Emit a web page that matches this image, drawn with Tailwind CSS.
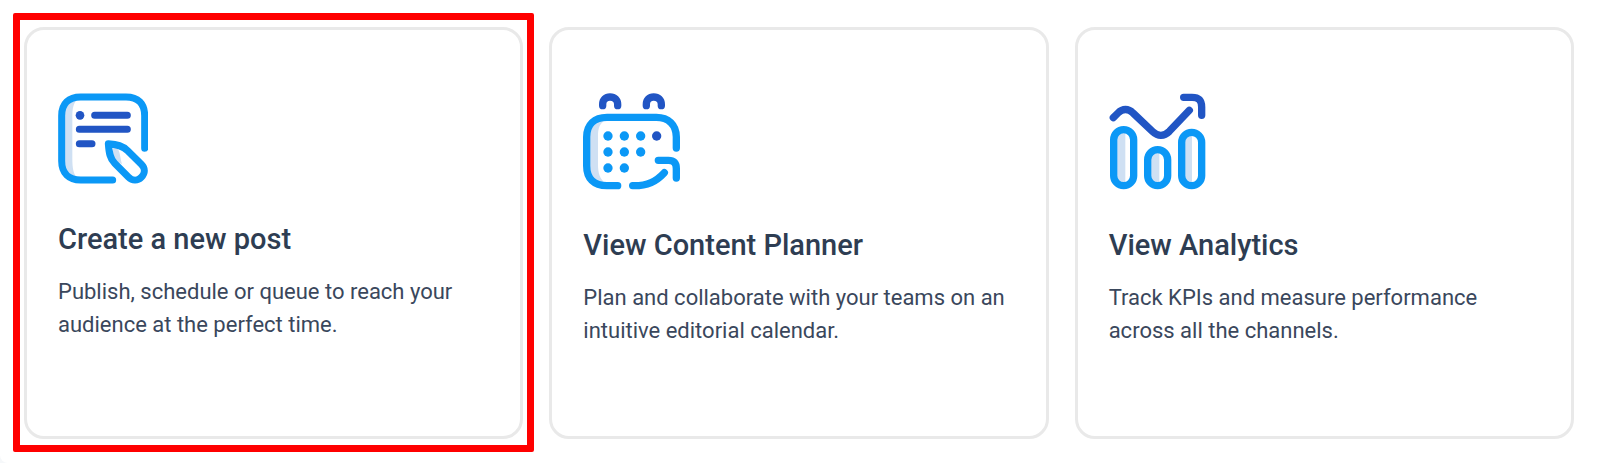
<!DOCTYPE html>
<html lang="en">
<head>
<meta charset="utf-8">
<meta name="viewport" content="width=device-width, initial-scale=1">
<title>Quick actions</title>
<script src="https://cdn.jsdelivr.net/npm/@tailwindcss/browser@4"></script>
</head>
<body class="bg-[#f6f8fa] font-['Roboto',sans-serif] text-[#2e3d52]">
<main class="min-h-screen rounded-bl-lg bg-white pt-[27px] pr-[26px] pb-6 pl-6">
  <div class="grid grid-cols-1 gap-[26px] md:grid-cols-3">

    <a href="#post" class="relative block min-h-[412px] rounded-[20px] border-3 border-[#e9e9e9] px-[31px] pt-[63px] pb-12">
      <span class="pointer-events-none absolute -top-[17px] -right-[14px] -bottom-4 -left-[14px] rounded-xs border-7 border-[#ff0000]"></span>
      <svg class="block h-[91px] w-[90px]" viewBox="24 24 270 273" fill="none" stroke-linecap="round" stroke-linejoin="round" aria-hidden="true">
        <path d="M84 40C48 40 38 58 38 90V230C38 266 52 282 86 284C70 270 67 250 67 220V98C67 70 70 54 84 40Z" fill="#cfe0f3"/>
        <path d="M190 186C212 188 208 210 216 238L184 218Z" fill="#cfe0f3"/>
        <path d="M284 190V92C284 56 264 36 228 36H92C56 36 35 56 35 92V228C35 264 56 285 92 285H188" stroke="#0b98f6" stroke-width="21"/>
        <path d="M175 176C177 204 180 221 194 235L235 276C247 288 263 288 274 277C286 265 286 250 274 238L233 197C218 182 202 178 175 176Z" stroke="#0b98f6" stroke-width="21"/>
        <circle cx="90" cy="91" r="13" fill="#2155c4"/>
        <path d="M134 91H232M88 133H232M88 176H126" stroke="#2155c4" stroke-width="21"/>
      </svg>
      <h2 class="mt-[37px] text-[29px] leading-9 font-medium">Create a new post</h2>
      <p class="mt-[18px] text-[22px] leading-[33px] text-[#3a475c]">Publish, schedule or queue to reach your audience at the perfect time.</p>
    </a>

    <a href="#planner" class="block min-h-[412px] rounded-[20px] border-3 border-[#e9e9e9] px-[31px] pt-[63px] pb-12">
      <svg class="block h-[97px] w-[97px]" viewBox="24 24 291 291" fill="none" stroke-linecap="round" stroke-linejoin="round" aria-hidden="true">
        <path d="M92 104C52 104 38 116 38 156V250C38 286 54 296 92 296C74 282 69 264 69 238V154C69 128 74 116 92 104Z" fill="#cfe0f3"/>
        <path d="M83 62V58C83 44 92 36 105 36C119 36 128 44 128 58V62M214 62V58C214 44 223 36 236 36C250 36 259 44 259 58V62" stroke="#2155c4" stroke-width="22"/>
        <path d="M304 189V156C304 119 280 97 244 97H96C58 97 35 119 35 156V242C35 280 56 302 96 302H128" stroke="#0b98f6" stroke-width="22"/>
        <path d="M173 302C218 303 244 289 268 263M250 226H280C297 226 304 235 304 251V279" stroke="#0b98f6" stroke-width="22"/>
        <g fill="#0b98f6">
          <circle cx="99" cy="153" r="14"/><circle cx="148" cy="153" r="14"/><circle cx="197" cy="153" r="14"/>
          <circle cx="99" cy="201" r="14"/><circle cx="148" cy="201" r="14"/><circle cx="197" cy="201" r="14"/>
          <circle cx="99" cy="249" r="14"/><circle cx="148" cy="249" r="14"/>
        </g>
        <circle cx="245" cy="153" r="14" fill="#2155c4"/>
      </svg>
      <h2 class="mt-[37px] text-[29px] leading-9 font-medium">View Content Planner</h2>
      <p class="mt-[18px] text-[22px] leading-[33px] text-[#3a475c]">Plan and collaborate with your teams on an intuitive editorial calendar.</p>
    </a>

    <a href="#analytics" class="block min-h-[412px] rounded-[20px] border-3 border-[#e9e9e9] px-[31px] pt-[63px] pb-12">
      <svg class="block h-[97px] w-[97px]" viewBox="27 24 291 291" fill="none" stroke-linecap="round" stroke-linejoin="round" aria-hidden="true">
        <path d="M76 140V296C52 296 42 286 42 270V164C42 146 52 140 76 140ZM178 198V296C156 296 146 286 146 272V222C146 204 156 198 178 198ZM276 148V296C258 296 248 286 248 270V172C248 154 258 148 276 148Z" fill="#cfe0f3"/>
        <rect x="41" y="134" width="60" height="168" rx="30" stroke="#0b98f6" stroke-width="22"/>
        <rect x="143" y="194" width="60" height="108" rx="30" stroke="#0b98f6" stroke-width="22"/>
        <rect x="245" y="142" width="60" height="160" rx="30" stroke="#0b98f6" stroke-width="22"/>
        <path d="M40 98L54 84C68 70 85 70 99 84L158 140C174 155 192 155 208 139L268 76M251 37H276C296 37 305 46 305 66V91" stroke="#2155c4" stroke-width="22"/>
      </svg>
      <h2 class="mt-[37px] text-[29px] leading-9 font-medium">View Analytics</h2>
      <p class="mt-[18px] text-[22px] leading-[33px] text-[#3a475c]">Track KPIs and measure performance across all the channels.</p>
    </a>

  </div>
</main>
</body>
</html>
